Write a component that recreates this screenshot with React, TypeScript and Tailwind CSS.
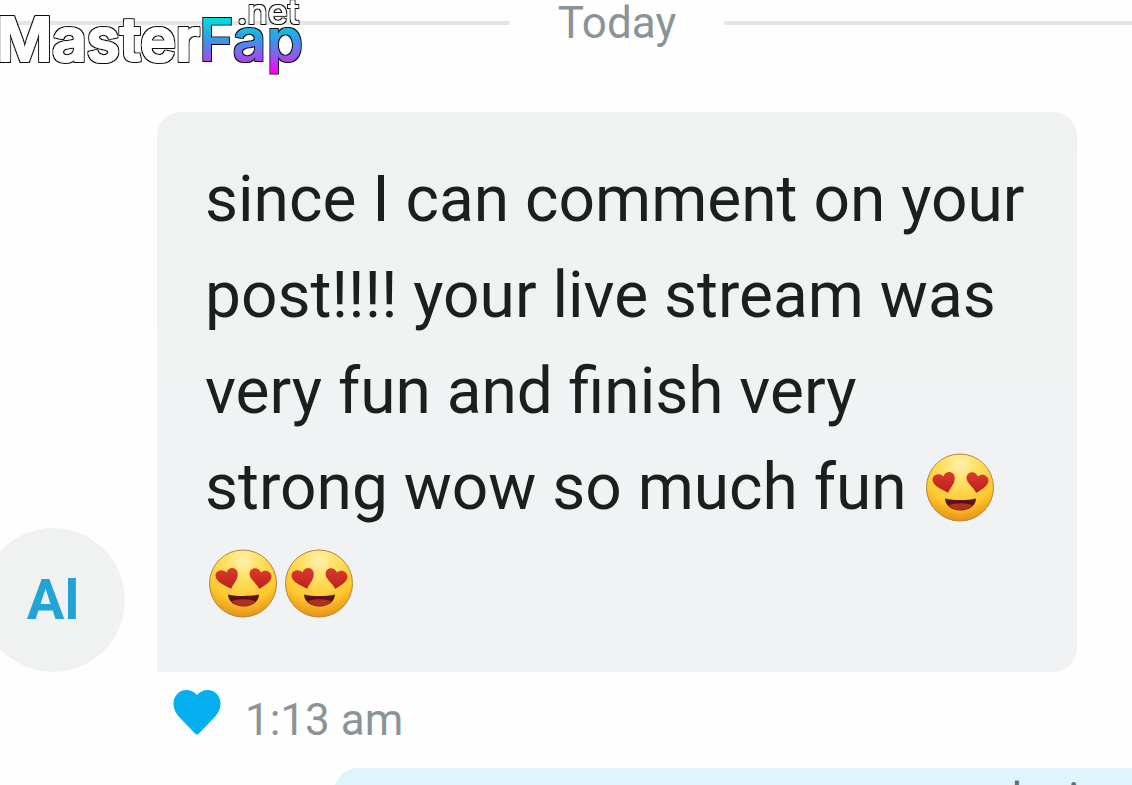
import React from 'react';

const HeartEyes = () => (
  <svg viewBox="-2 0 72 72" role="img" aria-label="smiling face with heart eyes" className="inline-block size-[72px] mr-1 align-[-15px]">
    <defs>
      <radialGradient id="face" cx="50%" cy="16%" r="86%">
        <stop offset="0%" stopColor="#fff0b0" />
        <stop offset="30%" stopColor="#fee163" />
        <stop offset="70%" stopColor="#fec72c" />
        <stop offset="100%" stopColor="#e58a14" />
      </radialGradient>
      <linearGradient id="eye" x1="0" y1="0" x2="0" y2="1">
        <stop offset="0%" stopColor="#dc3a2e" />
        <stop offset="100%" stopColor="#bb211d" />
      </linearGradient>
    </defs>
    <circle cx="36" cy="35.5" r="33.500" fill="url(#face)" stroke="#b08a3c" strokeWidth="1" />
    <path d="M23.500 40.500C18 37.500 8.500 34 8.500 27.500C8.500 22.500 15.500 20 19.500 24.500C21 18.500 29 18.500 30.500 24C32 30 27 35 24.500 40Q24 41 23.500 40.500Z" fill="url(#eye)" />
    <path d="M52 40.500C50 35.500 42 31 42.500 25C43.500 19 51.500 18.500 54 24.500C58 20.500 64.500 23.500 64.500 28.500C64 35 57 37.500 53 40.500Q52.500 41 52 40.500Z" fill="url(#eye)" />
    <path d="M21 46.500C30 48.500 43 48.500 52 46.500C52 53.500 45 58.500 36.500 58.500S21 53.500 21 46.500Z" fill="#5a130e" />
    <path d="M24.500 53.500C30 50.500 43 50.500 48.500 53.500C43 59.500 30 59.500 24.500 53.500Z" fill="#b03020" />
  </svg>
);

const Logo = () => (
  <svg
    viewBox="0 0 320 90"
    className="absolute left-0 top-0 h-[90px] w-80 font-['Inter',sans-serif] font-semibold"
    role="img"
    aria-label="MasterFap.net"
  >
    <defs>
      <linearGradient id="brand" gradientUnits="userSpaceOnUse" x1="0" y1="16" x2="0" y2="77">
        <stop offset="0%" stopColor="#00e5d8" />
        <stop offset="35%" stopColor="#2f9fe8" />
        <stop offset="65%" stopColor="#8b5cf0" />
        <stop offset="90%" stopColor="#ff00ff" />
      </linearGradient>
      <filter id="outline" filterUnits="userSpaceOnUse" x="0" y="0" width="320" height="90">
        <feMorphology in="SourceAlpha" operator="dilate" radius="1" result="grown" />
        <feFlood floodColor="#111" />
        <feComposite in2="grown" operator="in" />
        <feMerge>
          <feMergeNode />
          <feMergeNode in="SourceGraphic" />
        </feMerge>
      </filter>
    </defs>
    <g strokeLinejoin="round">
      <text x="-3" y="61" fontSize="60" fill="#fff" stroke="#fff" strokeWidth="2" filter="url(#outline)">Master</text>
      <text x="199" y="61" fontSize="59" fill="url(#brand)" filter="url(#outline)">Fap</text>
      <text x="237" y="24" fontSize="34" fill="#fff" fontWeight="500" filter="url(#outline)">.net</text>
    </g>
  </svg>
);

const Heart = () => (
  <svg viewBox="0 -2 48 48" className="size-12" aria-hidden="true">
    <path
      d="M24 5C27 1.500 31 0 34.500 0C42 0 47.500 6 47.500 13.500C47.500 22 42 27 36 33L26 43.500Q24 45.500 22 43.500L12 33C6 27 .5 22 .5 13.500C.5 6 6 0 13.500 0C17 0 21 1.500 24 5Z"
      fill="#04aeef"
    />
  </svg>
);

const DayDivider = ({ label }: { label: string }) => (
  <div className="flex h-[46px] items-center gap-12">
    <span className="h-1 flex-[5] rounded-r-full bg-[#e4e5e5]" />
    <span className="text-[44px] leading-[44px] text-[#8a9496]">{label}</span>
    <span className="h-1 flex-[4] rounded-l-full bg-[#e4e5e5]" />
  </div>
);

const App = () => {
  return (
    <main className="relative h-screen overflow-hidden bg-[#fefefe] font-['Roboto',sans-serif]">
      <DayDivider label="Today" />
      <Logo />

      <article className="mt-[66px] mr-[55px] -ml-[19px] grid grid-cols-[144px_1fr] gap-x-8">
        <div className="flex size-36 items-center justify-center self-end rounded-full bg-[#f0f2f2] text-[56px] font-bold text-[#22a5d6]">
          Al
        </div>
        <p className="rounded-3xl rounded-bl-none bg-linear-to-b from-[#f0f2f2] to-[#f1f2f4] px-12 py-10 text-[64px] leading-[96px] text-[#1d1f1f]">
          since I can comment on your post!!!! your live stream was very fun and finish very strong wow so much fun{' '}
          <HeartEyes />
          <HeartEyes />
          <HeartEyes />
        </p>
        <footer className="col-start-2 flex items-start gap-6 px-4 pt-4">
          <button type="button" aria-label="Liked">
            <Heart />
          </button>
          <time className="text-[44px] leading-[64px] text-[#8a9496]">1:13 am</time>
        </footer>
      </article>

      <article className="mt-4 ml-[334px] rounded-tl-3xl bg-[#dff4fb] pt-1 pr-1 pl-12 text-right text-[44px] leading-[54px] text-[#5d7178]">
        loving
      </article>
    </main>
  );
};

export default App;
